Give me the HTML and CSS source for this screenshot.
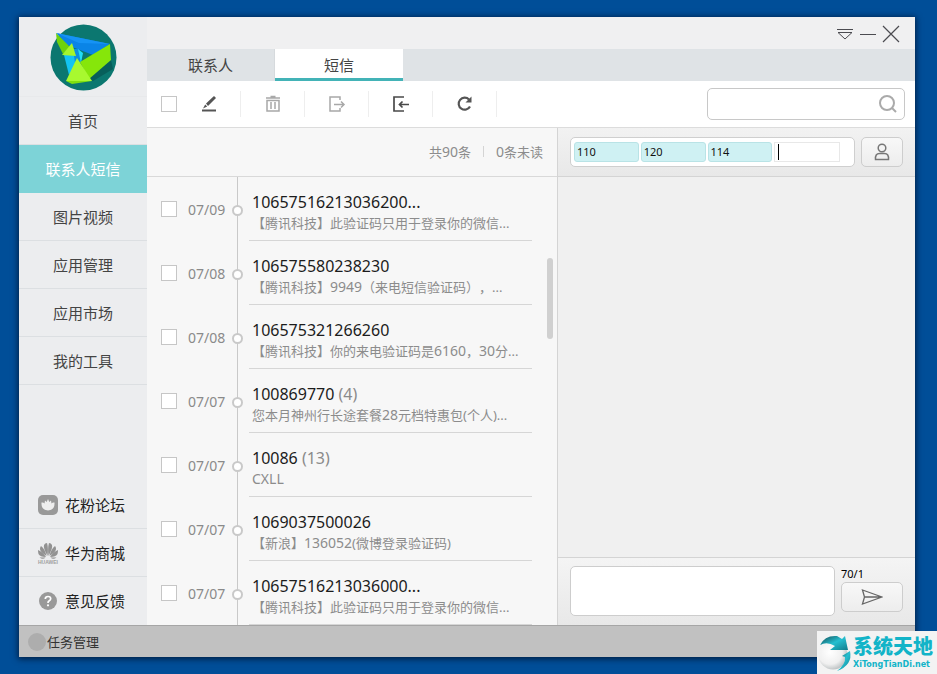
FILE: index.html
```html
<!DOCTYPE html>
<html lang="zh-CN">
<head>
<meta charset="utf-8">
<title>联系人短信</title>
<link rel="stylesheet" href="styles.css">
</head>
<body>
<div class="window">
  <div class="body">
    <aside class="side">
      <div class="logo">
        <svg width="68" height="68" viewBox="0 0 68 68" aria-hidden="true">
          <circle cx="34.500" cy="34.500" r="33" fill="#0b7770"/>
          <path d="M62 37L38 56L44 58L64 46Z" fill="#075f5b"/>
          <path d="M7 10L61 21L44 32L18 22Z" fill="#0a84e6"/>
          <path d="M7 10L61 21L30 20Z" fill="#1593f5"/>
          <path d="M15 32L29 26L32 38L20 52Z" fill="#13c4f3"/>
          <path d="M24 26L30 26L32 40L26 40Z" fill="#0b8fe0"/>
          <path d="M29 26L32 40L34 30Z" fill="#21dcf7"/>
          <path d="M7 10L21 24L14 31L8 19Z" fill="#6fd20c"/>
          <path d="M31 39L61 21L62 37L40 56Z" fill="#86e60a"/>
          <path d="M23 20L13 32L27 33Z" fill="#a5f62c"/>
          <path d="M28 35L43 58L17 58Z" fill="#a8f92f"/>
          <path d="M17 58L43 58L23 61Z" fill="#7fe00f"/>
        </svg>
      </div>
      <nav class="menu">
        <a href="#">首页</a>
        <a href="#" class="active">联系人短信</a>
        <a href="#">图片视频</a>
        <a href="#">应用管理</a>
        <a href="#">应用市场</a>
        <a href="#">我的工具</a>
      </nav>
      <nav class="links">
        <a href="#">
          <svg width="22" height="22" viewBox="0 0 22 22" aria-hidden="true"><rect x="1" y="1" width="20" height="20" rx="5" fill="#999"/><path d="M4.500 8.500Q6.500 8 7.500 9.500L8 6.500L9.700 8L11 5L12.300 8L14 6.500L14.500 9.500Q15.500 8 17.500 8.500Q18 16 11 16.500Q4 16 4.500 8.500Z" fill="#eee"/></svg>
          花粉论坛</a>
        <a href="#">
          <svg width="22" height="22" viewBox="0 0 22 22" aria-hidden="true"><g fill="#929292"><path d="M10.500 14Q6 6 7 3Q8 1 10 1Q11.500 6 10.500 14Z"/><path d="M11.500 14Q16 6 15 3Q14 1 12 1Q10.500 6 11.500 14Z"/><path d="M9.500 14Q3 10 3 7Q3 5 4 4Q8 7 9.500 14Z"/><path d="M12.500 14Q19 10 19 7Q19 5 18 4Q14 7 12.500 14Z"/><path d="M9 15Q3 15 1.500 12Q1 10 1 8Q6 10 9 15Z"/><path d="M13 15Q19 15 20.500 12Q21 10 21 8Q16 10 13 15Z"/><path d="M8.500 15.500Q6 18 2.500 15.500Z"/><path d="M13.500 15.500Q16 18 19.500 15.500Z"/></g><text x="11" y="22" text-anchor="middle" class="brand">HUAWEI</text></svg>
          华为商城</a>
        <a href="#">
          <svg width="22" height="22" viewBox="0 0 22 22" aria-hidden="true"><circle cx="11" cy="11" r="9" fill="#999"/><path d="M8.300 9Q8.300 6.500 11 6.500Q13.700 6.500 13.700 8.800Q13.700 10 12 11Q11 11.600 11 13" fill="none" stroke="#fff" stroke-width="1.700"/><circle cx="11" cy="15.300" r="1.100" fill="#fff"/></svg>
          意见反馈</a>
      </nav>
    </aside>
    <main class="main">
      <header class="titlebar">
        <button type="button" aria-label="菜单"><svg width="18" height="18" viewBox="0 0 18 18"><path d="M1 4.500h16M2 7.500h14L9 14Z" fill="none" stroke="#4b4b50"/></svg></button>
        <button type="button" aria-label="最小化"><svg width="18" height="18" viewBox="0 0 18 18"><path d="M1 9.500h16" stroke="#4b4b50"/></svg></button>
        <button type="button" aria-label="关闭"><svg width="18" height="18" viewBox="0 0 18 18"><path d="M1 1L17 17M17 1L1 17" stroke="#4b4b50" stroke-width="1.200"/></svg></button>
      </header>
      <div class="tabs">
        <button type="button">联系人</button>
        <button type="button" class="active">短信</button>
      </div>
      <div class="toolbar">
        <input type="checkbox" class="check" aria-label="全选">
        <div class="tools">
          <button type="button" aria-label="编辑"><svg width="18" height="18" viewBox="0 0 18 18"><path d="M2 15.500h14" stroke="#555" stroke-width="2"/><path d="M6 8.500L14 1L16 3L8 11Z M5.200 9.500L7.200 11.500L3 13.500Z" fill="#555"/></svg></button>
          <button type="button" aria-label="删除"><svg width="18" height="18" viewBox="0 0 18 18" fill="none" stroke="#a8a8a8"><path d="M2 3h14M6.500 1.500h5" stroke-width="1.500"/><path d="M3 5.500h12v10.500h-12Z" stroke-width="1.500"/><path d="M7 7v7M11 7v7" stroke-width="1.500"/></svg></button>
          <button type="button" aria-label="导出"><svg width="18" height="18" viewBox="0 0 18 18" fill="none" stroke="#a8a8a8" stroke-width="1.500"><path d="M12 5V2H2v14h10v-3M6 9.500h10M13 6.500l3 3l-3 3"/></svg></button>
          <button type="button" aria-label="导入"><svg width="18" height="18" viewBox="0 0 18 18" fill="none" stroke="#4a4a4a" stroke-width="1.700"><path d="M12 2H2v14h10M17 9.500H7M10.500 6.500l-3 3l3 3"/></svg></button>
          <button type="button" aria-label="刷新"><svg width="18" height="18" viewBox="0 0 18 18"><path d="M13 4.500A6 6 0 1 0 14 11.500" fill="none" stroke="#555" stroke-width="2.200"/><path d="M15.500 1.500V7.500H9.500Z" fill="#555"/></svg></button>
        </div>
        <label class="search">
          <input type="text" aria-label="搜索">
          <svg width="20" height="20" viewBox="0 0 20 20" aria-hidden="true"><circle cx="9" cy="9" r="7" fill="none" stroke="#aaa" stroke-width="2"/><path d="M14 14L18 18" stroke="#aaa" stroke-width="2"/></svg>
        </label>
      </div>
      <div class="panes">
        <section class="list">
          <div class="counts"><span>共<em>90</em>条</span><i></i><span><em>0</em>条未读</span></div>
          <ul class="rows">
            <li><input type="checkbox" class="check" aria-label="选择"><time>07/09</time><b></b><div class="msg"><h3>10657516213036200...</h3><p>【腾讯科技】此验证码只用于登录你的微信...</p></div></li>
            <li><input type="checkbox" class="check" aria-label="选择"><time>07/08</time><b></b><div class="msg"><h3>106575580238230</h3><p>【腾讯科技】<em>9949</em>（来电短信验证码），...</p></div></li>
            <li><input type="checkbox" class="check" aria-label="选择"><time>07/08</time><b></b><div class="msg"><h3>106575321266260</h3><p>【腾讯科技】你的来电验证码是<em>6160</em>，<em>30</em>分...</p></div></li>
            <li><input type="checkbox" class="check" aria-label="选择"><time>07/07</time><b></b><div class="msg"><h3>100869770 <span>(4)</span></h3><p>您本月神州行长途套餐<em>28</em>元档特惠包(个人)...</p></div></li>
            <li><input type="checkbox" class="check" aria-label="选择"><time>07/07</time><b></b><div class="msg"><h3>10086 <span>(13)</span></h3><p><em>CXLL</em></p></div></li>
            <li><input type="checkbox" class="check" aria-label="选择"><time>07/07</time><b></b><div class="msg"><h3>1069037500026</h3><p>【新浪】<em>136052</em>(微博登录验证码)</p></div></li>
            <li><input type="checkbox" class="check" aria-label="选择"><time>07/07</time><b></b><div class="msg"><h3>10657516213036000...</h3><p>【腾讯科技】此验证码只用于登录你的微信...</p></div></li>
          </ul>
          <div class="thumb"></div>
        </section>
        <section class="chat">
          <div class="to">
            <div class="recipients"><span>110</span><span>120</span><span>114</span><label><i class="caret"></i><input type="text" aria-label="收件人"></label></div>
            <button type="button" class="btn" aria-label="选择联系人"><svg width="18" height="18" viewBox="0 0 18 18" fill="none" stroke="#777" stroke-width="1.500"><circle cx="9" cy="5" r="3.800"/><path d="M2.500 16.500Q2 10.500 6.500 10.500H11.500Q16 10.500 15.500 16.500Z"/></svg></button>
          </div>
          <div class="history"></div>
          <div class="compose">
            <textarea aria-label="短信内容"></textarea>
            <div class="send">
              <span>70/1</span>
              <button type="button" class="btn" aria-label="发送"><svg width="22" height="18" viewBox="0 0 22 18" fill="none" stroke="#666" stroke-width="1.300"><path d="M1.500 2L21 9L1.500 16L3.500 9ZM3.500 9H21"/></svg></button>
            </div>
          </div>
        </section>
      </div>
    </main>
  </div>
  <footer class="status"><i></i>任务管理</footer>
</div>
<div class="mark">
  <svg width="36" height="40" viewBox="0 0 36 40" aria-hidden="true">
    <defs>
      <radialGradient id="ball" cx=".4" cy=".4" r=".7"><stop offset="0" stop-color="#fff"/><stop offset=".6" stop-color="#f0f0f0"/><stop offset="1" stop-color="#a9b0b2"/></radialGradient>
      <linearGradient id="arc" x1="0" y1="0" x2="1" y2="1"><stop offset="0" stop-color="#14484f"/><stop offset=".5" stop-color="#25bfd0"/><stop offset="1" stop-color="#117c8b"/></linearGradient>
    </defs>
    <circle cx="16" cy="22" r="14.500" fill="url(#ball)"/>
    <path d="M3 12Q8 2 20 3L25 6L28 3L31 17L13 17L18 13Q10 8 3 12Z" fill="url(#arc)"/>
    <path d="M25 23L33 18Q36 32 20 38Q29 31 28 24Z" fill="url(#arc)"/>
  </svg>
  <div><strong>系统天地</strong><small>XiTongTianDi.net</small></div>
</div>
</body>
</html>
```
FILE: styles.css
```css
* { box-sizing: border-box; }
body {
  margin: 0;
  height: 100vh;
  padding: 17px 22px 17px 19px;
  background: #004e98;
  color: #444;
  font-family: "Noto Sans", "Noto Sans CJK SC", sans-serif;
  font-size: 15px;
  text-spacing-trim: space-all;
  overflow: hidden;
}
button, input, textarea { font: inherit; color: inherit; margin: 0; }
button { padding: 0; border: 0; background: none; }
a { color: inherit; text-decoration: none; }
svg { display: block; flex: none; }
em { font-style: normal; font-size: 14px; }

.window {
  display: flex;
  flex-direction: column;
  height: 100%;
  background: #f0f0f1;
  box-shadow: 0 1px 6px 1px rgba(0, 15, 40, .75);
}
.body { flex: 1; display: flex; min-height: 0; }

.side { width: 128px; display: flex; flex-direction: column; background: #ecedef; }
.logo { height: 80px; padding-top: 6px; display: flex; justify-content: center; border-bottom: 1px solid #e8e9eb; }
.menu a, .links a {
  display: flex;
  align-items: center;
  justify-content: center;
  height: 48px;
  border-bottom: 1px solid #dcdfe2;
}
.menu a.active { background: #7dd3d7; color: #fff; border-color: #7dd3d7; }
.links { margin-top: auto; color: #222; }
.links a { justify-content: flex-start; gap: 6px; padding-left: 18px; }
.links a:last-child { border-bottom-color: transparent; }
.brand { font: bold 5px "Liberation Sans", sans-serif; fill: #a0a0a0; }

.main { flex: 1; min-width: 0; display: flex; flex-direction: column; }
.titlebar { height: 32px; padding: 2px 15px 0 0; display: flex; align-items: center; justify-content: flex-end; gap: 5px; }
.tabs { display: flex; height: 32px; background: #dfe3e6; }
.tabs button { width: 128px; border-bottom: 3px solid transparent; border-right: 1px solid #d6dadd; padding-top: 2px; }
.tabs button.active { background: #fff; border-bottom-color: #43b3b7; border-right: 0; }

.toolbar { height: 47px; display: flex; align-items: center; padding: 0 10px 0 14px; background: #fff; border-bottom: 1px solid #dcdcdc; }
.check {
  appearance: none;
  flex: none;
  width: 16px;
  height: 16px;
  border: 1px solid #c6c6c6;
  background: #fff;
}
.tools { display: flex; }
.tools button { width: 64px; height: 26px; display: flex; align-items: center; justify-content: center; border-right: 1px solid #eee; }
.search { margin-left: auto; width: 198px; height: 32px; display: flex; align-items: center; padding: 0 6px; border: 1px solid #c8c8c8; border-radius: 5px; background: #fff; }
.search input { flex: 1; min-width: 0; border: 0; outline: 0; background: none; }

.panes { flex: 1; display: flex; min-height: 0; }
.list { position: relative; flex: 0 0 411px; display: flex; flex-direction: column; background: #f7f7f7; border-right: 1px solid #d4d4d4; }
.counts { height: 49px; display: flex; align-items: center; justify-content: flex-end; gap: 12px; padding: 0 14px 2px 0; border-bottom: 1px solid #d9d9d9; color: #8c8c8c; font-size: 13px; }
.counts i { width: 1px; height: 11px; background: #d4d4d4; }
.rows {
  flex: 1;
  min-height: 0;
  overflow: hidden;
  margin: 0;
  padding: 0;
  list-style: none;
  background: linear-gradient(#c9c9c9, #c9c9c9) 90px 0 / 1px 100% no-repeat;
}
.rows li { height: 64px; display: flex; align-items: center; padding: 0 25px 0 14px; }
.rows time { width: 44px; margin-left: 11px; font-size: 14px; color: #8a8a8a; }
.rows b { width: 11px; height: 11px; margin-top: 2px; border: 2px solid #c9c9c9; border-radius: 50%; background: #fff; }
.msg { flex: 1; height: 64px; margin-left: 6px; padding: 13px 0 0 3px; border-bottom: 1px solid #d6d6d6; white-space: nowrap; }
.msg h3 { margin: 0; font-size: 16px; line-height: 24px; font-weight: 400; color: #1c1c1c; }
.msg h3 span { color: #8a8a8a; }
.msg p { margin: 0; font-size: 13px; line-height: 18px; color: #8c8c8c; }
.thumb { position: absolute; right: 4px; top: 130px; width: 6px; height: 81px; border-radius: 3px; background: #d0d0d0; }

.chat { flex: 1; min-width: 0; display: flex; flex-direction: column; background: #f0f0f0; }
.to { height: 49px; display: flex; align-items: center; gap: 6px; padding: 0 12px; border-bottom: 1px solid #d4d4d4; background: linear-gradient(#f2f2f2, #e8e8e8); }
.recipients { flex: 1; height: 30px; display: flex; align-items: center; gap: 2px; padding: 0 14px 0 3px; border: 1px solid #cfcfcf; border-radius: 5px; background: #fff; }
.recipients span, .recipients label { flex: 1; height: 20px; border: 1px solid #b9e3e6; border-radius: 3px; }
.recipients span { padding-left: 2px; background: #cff1f3; color: #111; font-size: 11px; line-height: 18px; }
.recipients label { display: flex; align-items: center; padding-left: 3px; border-color: #e8e8e8; border-radius: 0; }
.recipients input { width: 100%; min-width: 0; height: 16px; padding: 0; border: 0; outline: 0; font-size: 11px; }
.caret { flex: none; width: 1px; height: 16px; background: #000; }
.btn { width: 42px; height: 30px; display: flex; align-items: center; justify-content: center; border: 1px solid #cdcdcd; border-radius: 5px; background: linear-gradient(#f8f8f8, #ededed); }
.history { flex: 1; }
.compose { height: 68px; display: flex; gap: 6px; padding: 8px 12px; border-top: 1px solid #d4d4d4; background: linear-gradient(#f4f4f4, #e8e8e8); }
.compose textarea { flex: 1; min-width: 0; height: 50px; resize: none; border: 1px solid #cdcdcd; border-radius: 5px; outline: 0; background: #fff; }
.send { width: 62px; font-size: 11px; line-height: 16px; color: #000; }
.send span { display: block; }
.send .btn { width: 100%; }

.status { height: 32px; display: flex; align-items: center; gap: 1px; padding-left: 9px; border-top: 1px solid #a6a6a6; background: #c1c1c1; color: #333; font-size: 13px; }
.status i { width: 18px; height: 18px; border-radius: 50%; background: #adadad; }

.mark { position: fixed; right: 0; bottom: 0; width: 120px; height: 43px; display: flex; align-items: center; background: #f3f3f3; color: #12b4c8; }
.mark strong { display: block; font-size: 20px; line-height: 24px; font-weight: 900; }
.mark small { display: block; font: bold 8px/12px "DejaVu Sans", sans-serif; }
```
